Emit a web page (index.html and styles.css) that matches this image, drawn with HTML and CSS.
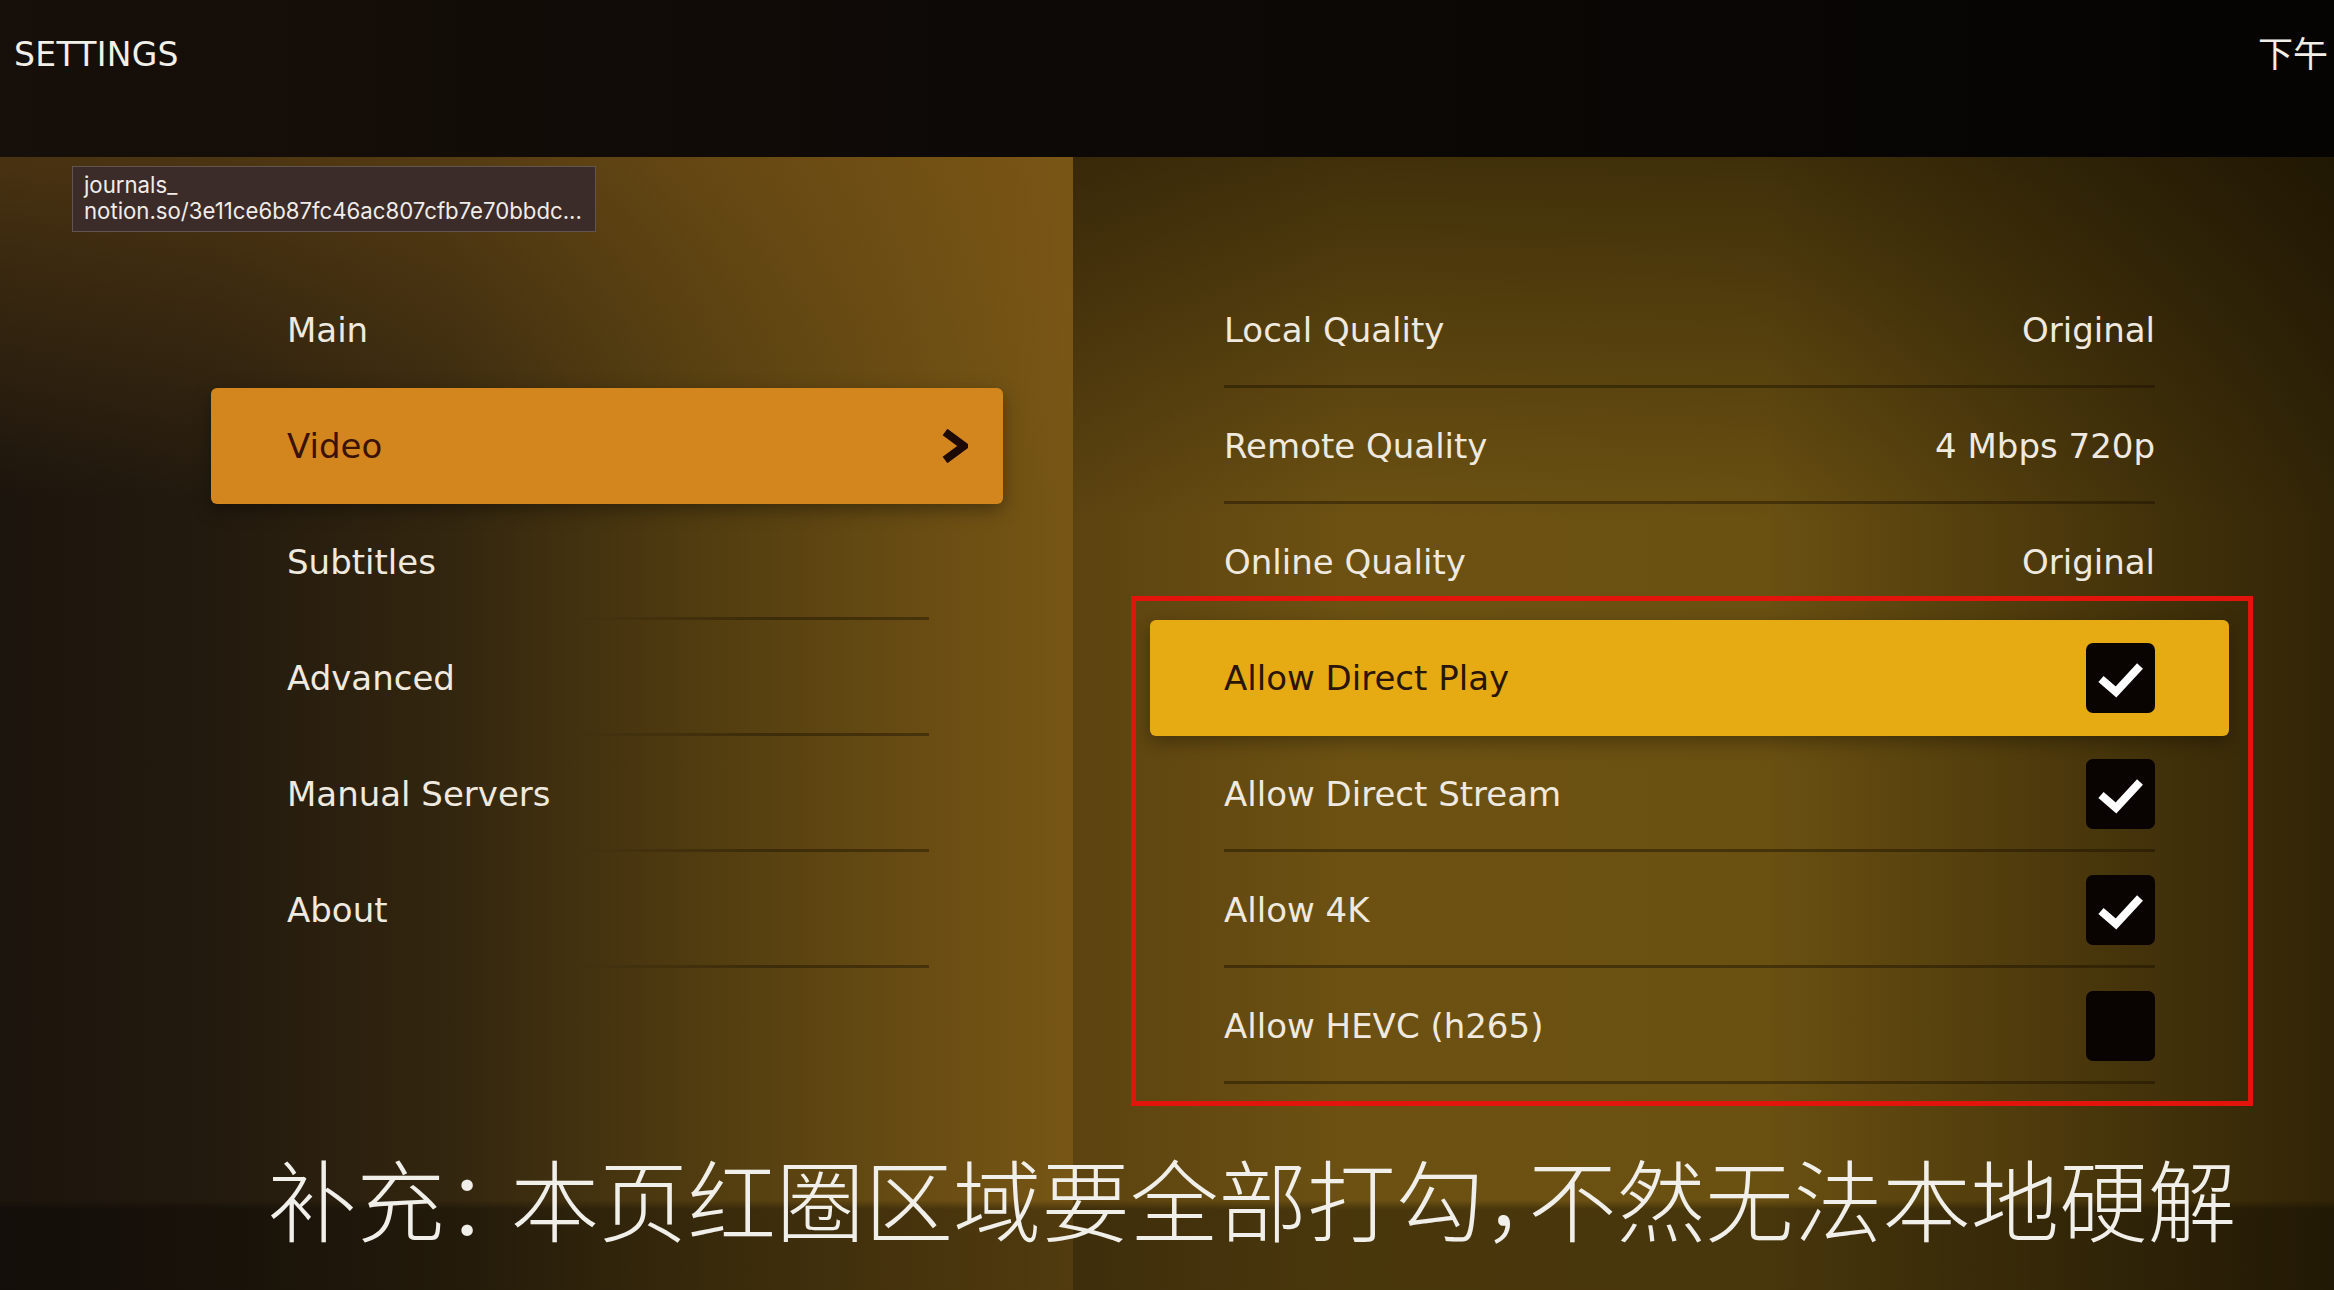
FILE: index.html
```html
<!DOCTYPE html>
<html lang="zh-CN">
<head>
<meta charset="utf-8">
<title>Settings</title>
<link rel="stylesheet" href="styles.css">
</head>
<body>
<div class="screen">
  <header class="topbar">
    <div class="title">SETTINGS</div>
    <div class="clock">下午</div>
  </header>
  <main class="content">
    <section class="menu-pane">
      <ul class="menu">
        <li class="menu-item">Main</li>
        <li class="menu-item active">
          <span>Video</span>
          <svg class="chevron" width="26" height="34" viewBox="0 0 26 34"><polyline points="3,3 22,17 3,31" fill="none" stroke="#1c0a03" stroke-width="8" stroke-linejoin="miter"/></svg>
        </li>
        <li class="menu-item lined">Subtitles</li>
        <li class="menu-item lined">Advanced</li>
        <li class="menu-item lined">Manual Servers</li>
        <li class="menu-item lined">About</li>
      </ul>
    </section>
    <section class="settings-pane">
      <ul class="settings">
        <li class="setting lined"><span>Local Quality</span><span>Original</span></li>
        <li class="setting lined"><span>Remote Quality</span><span>4 Mbps 720p</span></li>
        <li class="setting"><span>Online Quality</span><span>Original</span></li>
        <li class="setting active"><span>Allow Direct Play</span>
          <span class="check"><svg width="69" height="70" viewBox="0 0 69 70"><polyline points="15,36 30,49 54,23" fill="none" stroke="#fff" stroke-width="8"/></svg></span></li>
        <li class="setting lined"><span>Allow Direct Stream</span>
          <span class="check"><svg width="69" height="70" viewBox="0 0 69 70"><polyline points="15,36 30,49 54,23" fill="none" stroke="#fff" stroke-width="8"/></svg></span></li>
        <li class="setting lined"><span>Allow 4K</span>
          <span class="check"><svg width="69" height="70" viewBox="0 0 69 70"><polyline points="15,36 30,49 54,23" fill="none" stroke="#fff" stroke-width="8"/></svg></span></li>
        <li class="setting lined"><span>Allow HEVC (h265)</span>
          <span class="check"></span></li>
      </ul>
    </section>
  </main>
  <div class="tooltip">
    <div>journals_</div>
    <div>notion.so/3e11ce6b87fc46ac807cfb7e70bbdc...</div>
  </div>
  <div class="annotation"></div>
  <div class="caption">补充<span class="colon">：</span>本页红圈区域要全部打勾<span class="comma">，</span>不然无法本地硬解</div>
</div>
</body>
</html>
```

FILE: styles.css
```css
html, body {
  margin: 0;
  padding: 0;
}

body {
  width: 2334px;
  height: 1290px;
  overflow: hidden;
  background: #000;
  font-family: "DejaVu Sans", "Noto Sans CJK SC", sans-serif;
}

.screen {
  position: relative;
  width: 2334px;
  height: 1290px;
  display: flex;
  flex-direction: column;
}

.topbar {
  height: 157px;
  flex: none;
  box-sizing: border-box;
  display: flex;
  justify-content: space-between;
  align-items: flex-start;
  padding: 38px 6px 0 14px;
  background: linear-gradient(to right, #170f09 0%, #0d0906 45%, #050403 100%);
  color: #f2efe9;
}

.title {
  font-size: 33px;
  line-height: 33px;
  letter-spacing: 0.3px;
}

.clock {
  font-family: "Noto Sans CJK SC", sans-serif;
  font-size: 35px;
  line-height: 35px;
  margin-top: -4px;
}

.content {
  flex: 1;
  display: flex;
}

.menu-pane {
  width: 1073px;
  flex: none;
  box-sizing: border-box;
  padding: 115px 0 0 211px;
  background:
    linear-gradient(to bottom, rgba(0,0,0,0) 1043px, rgba(0,0,0,0.32) 1052px),
    linear-gradient(to bottom, rgba(125,85,22,0.45) 0%, rgba(125,85,22,0) 30%),
    linear-gradient(to right, #1c150d 0%, #231a0e 20%, #33260f 42%, #523d10 66%, #6b4e13 88%, #775615 100%);
}

.settings-pane {
  flex: 1;
  box-sizing: border-box;
  padding: 115px 0 0 77px;
  background:
    linear-gradient(to bottom, rgba(0,0,0,0) 1043px, rgba(0,0,0,0.32) 1052px),
    linear-gradient(to right, rgba(0,0,0,0) 0%, rgba(0,0,0,0) 55%, rgba(12,8,0,0.58) 100%),
    linear-gradient(to bottom, rgba(12,8,0,0.45) 0%, rgba(12,8,0,0) 32%),
    linear-gradient(to right, #5c4310 0%, #6c5112 22%, #6a5011 50%, #654c10 100%);
}

.menu, .settings {
  list-style: none;
  margin: 0;
  padding: 0;
}

.menu {
  width: 792px;
}

.menu-item {
  height: 116px;
  box-sizing: border-box;
  display: flex;
  align-items: center;
  justify-content: space-between;
  padding: 0 35px 0 76px;
  font-size: 34px;
  color: #efe9df;
}

.menu-item.lined {
  background: linear-gradient(to right, rgba(20,12,0,0) 0%, rgba(20,12,0,0) 45%, rgba(20,12,0,0.4) 75%, rgba(20,12,0,0.4) 100%) no-repeat 76px 100% / 642px 3px;
}

.menu-item.active {
  background: #d4861e;
  color: #3a1306;
  border-radius: 6px;
  box-shadow: 0 6px 18px rgba(0,0,0,0.35);
}

.chevron {
  display: block;
}

.settings {
  width: 1079px;
}

.setting {
  height: 116px;
  box-sizing: border-box;
  display: flex;
  align-items: center;
  justify-content: space-between;
  padding: 0 74px;
  font-size: 34px;
  color: #efe9df;
}

.setting.lined {
  background: linear-gradient(rgba(25,15,0,0.45), rgba(25,15,0,0.45)) no-repeat 74px 100% / 931px 3px;
}

.setting.active {
  background: #e6ab12;
  color: #2a1606;
  border-radius: 6px;
  box-shadow: 0 6px 18px rgba(0,0,0,0.3);
}

.check {
  width: 69px;
  height: 70px;
  border-radius: 7px;
  background: #090402;
  display: flex;
  align-items: center;
  justify-content: center;
}

.check svg {
  display: block;
}

.tooltip {
  position: absolute;
  left: 72px;
  top: 166px;
  width: 524px;
  height: 66px;
  box-sizing: border-box;
  padding: 5px 11px 0;
  background: #3b2b29;
  border: 1px solid #62554f;
  color: #f1ece8;
  font-family: "Inter", "Liberation Sans", sans-serif;
  font-size: 22.2px;
  line-height: 26px;
  white-space: nowrap;
}

.annotation {
  position: absolute;
  left: 1131px;
  top: 596px;
  width: 1122px;
  height: 510px;
  box-sizing: border-box;
  border: 5px solid #e3140c;
}

.caption {
  position: absolute;
  left: 268px;
  top: 1152px;
  font-family: "Noto Sans CJK SC", sans-serif;
  font-weight: 300;
  font-size: 88.5px;
  line-height: 88px;
  color: #f1efe9;
  white-space: nowrap;
}

.colon {
  letter-spacing: -0.26em;
}

.comma {
  letter-spacing: -0.5em;
}
```
